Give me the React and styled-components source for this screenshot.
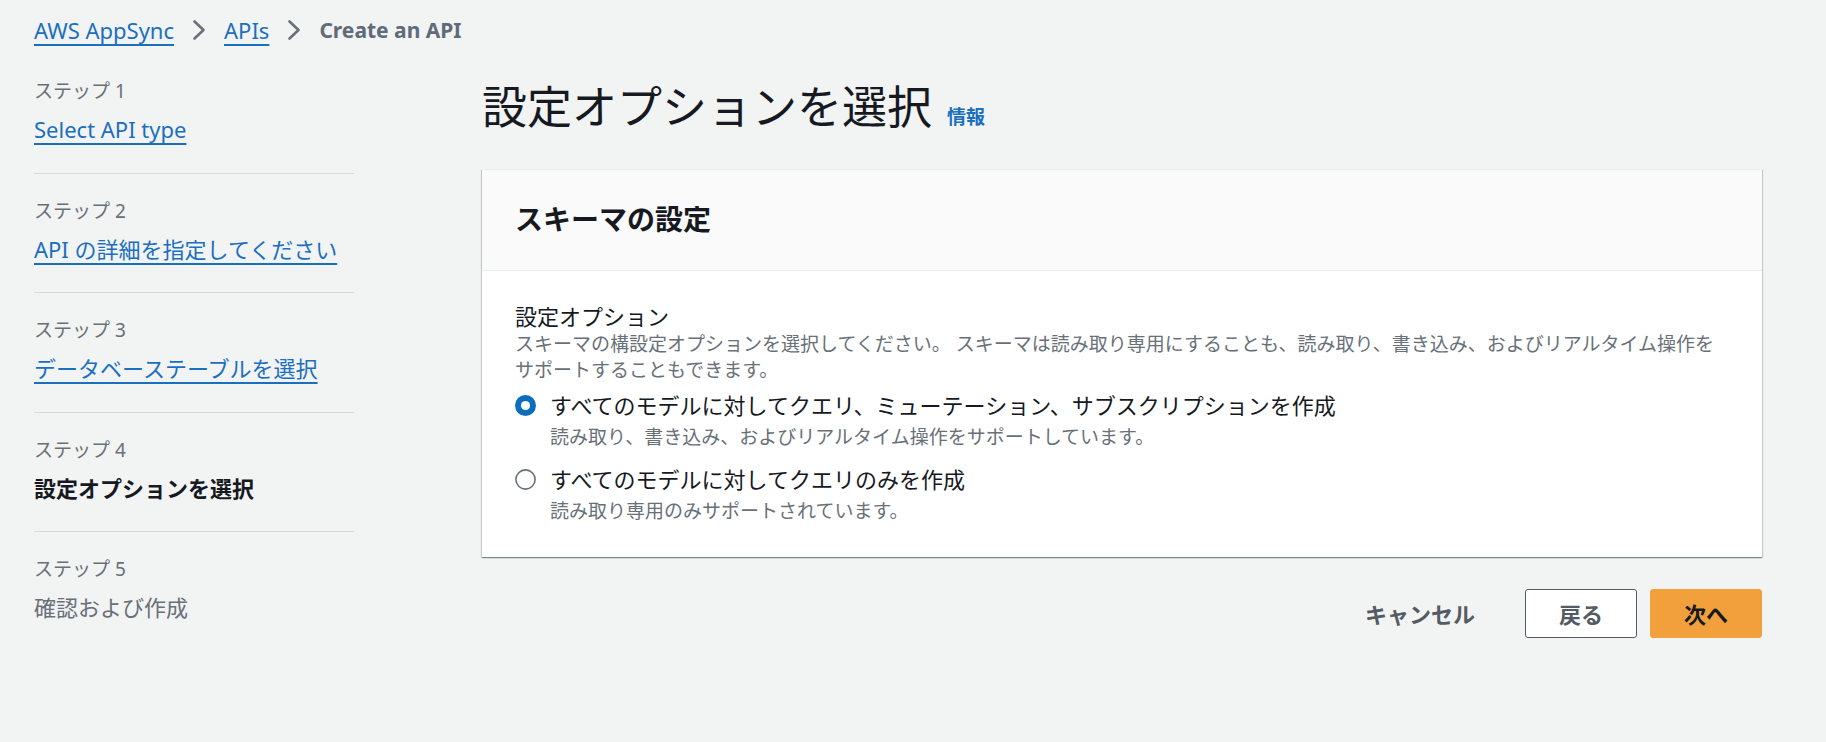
import React from 'react'
import styled, { createGlobalStyle } from 'styled-components'

const GlobalStyle = createGlobalStyle`
  html, body {
    margin: 0;
    padding: 0;
    background: #f2f3f3;
  }
  body {
    font-family: "Noto Sans", "Noto Sans CJK JP", sans-serif;
    color: #16191f;
  }
`

const linkBlue = '#1a6fbf'
const grey = '#687078'

const Page = styled.div`
  min-height: 742px;
  box-sizing: border-box;
  padding: 15px 64px 0 34px;
`

// Breadcrumbs
const Breadcrumbs = styled.nav`
  display: flex;
  align-items: center;
  gap: 18px;
  font-size: 22px;
  line-height: 30px;
`

const Crumb = styled.a`
  color: ${linkBlue};
  text-decoration: underline;
  text-decoration-thickness: 2px;
  text-underline-offset: 5px;
`

const CurrentCrumb = styled.span`
  color: #5f6b7a;
  font-size: 21px;
  font-weight: 700;
`

const Chevron = () => (
  <svg width="14" height="22" viewBox="0 0 14 22" fill="none">
    <path d="M2.5 2.5 L11.5 11 L2.5 19.5" stroke={grey} strokeWidth="2.6" strokeLinecap="round" strokeLinejoin="round" />
  </svg>
)

// Layout
const Layout = styled.div`
  display: grid;
  grid-template-columns: 320px 1fr;
  column-gap: 128px;
  margin-top: 34px;
`

// Wizard steps
const StepList = styled.ol`
  list-style: none;
  margin: 0;
  padding: 0;
`

const Step = styled.li`
  display: flex;
  flex-direction: column;
  align-items: flex-start;
  gap: 11px;
  padding: 25px 0 28.5px;
  border-bottom: 1px solid #d5dbdb;
  &:first-child {
    padding-top: 0;
  }
  &:last-child {
    border-bottom: none;
  }
`

const StepLabel = styled.span`
  font-size: 19px;
  line-height: 24px;
  color: ${grey};
`

const StepTitle = styled.span`
  font-size: 22px;
  line-height: 30px;
  font-weight: ${p => (p.$state === 'current' ? 700 : 400)};
  color: ${p => (p.$state === 'done' ? linkBlue : p.$state === 'current' ? '#16191f' : grey)};
  text-decoration: ${p => (p.$state === 'done' ? 'underline' : 'none')};
  text-decoration-thickness: 2px;
  text-underline-offset: 5px;
`

// Main
const Main = styled.main`
  display: flex;
  flex-direction: column;
  min-width: 0;
`

const TitleRow = styled.div`
  display: flex;
  align-items: baseline;
  gap: 15px;
`

const Title = styled.h1`
  margin: 0;
  font-size: 45px;
  line-height: 56px;
  font-weight: 400;
`

const InfoLink = styled.a`
  font-size: 19px;
  font-weight: 700;
  color: ${linkBlue};
  text-decoration: none;
`

const Card = styled.section`
  margin-top: 34px;
  background: #fff;
  border-top: 1px solid #eaeded;
  box-shadow: 0 1px 1px 0 rgba(0, 28, 36, 0.3), 1px 1px 1px 0 rgba(0, 28, 36, 0.15),
    -1px 1px 1px 0 rgba(0, 28, 36, 0.15);
`

const CardHeader = styled.div`
  background: #fafafa;
  border-bottom: 1px solid #eaeded;
  padding: 31px 33px 33px;
`

const CardTitle = styled.h2`
  margin: 0;
  font-size: 28px;
  line-height: 36px;
  font-weight: 700;
`

const CardBody = styled.div`
  padding: 30px 33px 35px;
`

const FieldLabel = styled.div`
  font-size: 22px;
  line-height: 30px;
`

const FieldDesc = styled.p`
  margin: 0;
  font-size: 19px;
  line-height: 26px;
  color: ${grey};
`

const Options = styled.div`
  display: flex;
  flex-direction: column;
  gap: 17px;
  margin-top: 8px;
`

const Option = styled.label`
  display: grid;
  grid-template-columns: 21px 1fr;
  column-gap: 14px;
  row-gap: 7px;
  align-items: center;
`

const OptionLabel = styled.span`
  font-size: 22px;
  line-height: 28px;
`

const OptionHint = styled.span`
  grid-column: 2;
  font-size: 19px;
  line-height: 22px;
  color: ${grey};
`

const Radio = ({ checked }) => (
  <svg width="21" height="21" viewBox="0 0 21 21">
    {checked ? (
      <>
        <circle cx="10.5" cy="10.5" r="10.5" fill="#0a6ebd" />
        <circle cx="10.5" cy="10.5" r="4.6" fill="#fff" />
      </>
    ) : (
      <circle cx="10.5" cy="10.5" r="9.6" fill="#fff" stroke={grey} strokeWidth="1.6" />
    )}
  </svg>
)

// Actions
const Actions = styled.div`
  display: flex;
  justify-content: flex-end;
  align-items: center;
  gap: 13px;
  margin-top: 32px;
`

const buttonStyles = {
  link: 'background: transparent; border-color: transparent; color: #545b64; padding: 0 36px;',
  normal: 'background: #fff; border-color: #545b64; color: #545b64;',
  primary: 'background: #f1a03b; border-color: #f1a03b; color: #16191f;',
}

const Button = styled.button`
  height: 49px;
  padding: 0 33px;
  border: 1px solid;
  border-radius: 3px;
  font-family: inherit;
  font-size: 22px;
  font-weight: 700;
  line-height: 30px;
  cursor: pointer;
  ${p => buttonStyles[p.$variant || 'normal']}
`

const steps = [
  { label: 'ステップ 1', title: 'Select API type', state: 'done' },
  { label: 'ステップ 2', title: 'API の詳細を指定してください', state: 'done' },
  { label: 'ステップ 3', title: 'データベーステーブルを選択', state: 'done' },
  { label: 'ステップ 4', title: '設定オプションを選択', state: 'current' },
  { label: 'ステップ 5', title: '確認および作成', state: 'pending' },
]

const options = [
  {
    label: 'すべてのモデルに対してクエリ、ミューテーション、サブスクリプションを作成',
    hint: '読み取り、書き込み、およびリアルタイム操作をサポートしています。',
    checked: true,
  },
  {
    label: 'すべてのモデルに対してクエリのみを作成',
    hint: '読み取り専用のみサポートされています。',
    checked: false,
  },
]

const App = () => (
  <>
    <GlobalStyle />
    <Page>
      <Breadcrumbs>
        <Crumb href="#">AWS AppSync</Crumb>
        <Chevron />
        <Crumb href="#">APIs</Crumb>
        <Chevron />
        <CurrentCrumb>Create an API</CurrentCrumb>
      </Breadcrumbs>

      <Layout>
        <StepList>
          {steps.map(s => (
            <Step key={s.label}>
              <StepLabel>{s.label}</StepLabel>
              <StepTitle as={s.state === 'done' ? 'a' : 'span'} href={s.state === 'done' ? '#' : undefined} $state={s.state}>
                {s.title}
              </StepTitle>
            </Step>
          ))}
        </StepList>

        <Main>
          <TitleRow>
            <Title>設定オプションを選択</Title>
            <InfoLink href="#">情報</InfoLink>
          </TitleRow>

          <Card>
            <CardHeader>
              <CardTitle>スキーマの設定</CardTitle>
            </CardHeader>
            <CardBody>
              <FieldLabel>設定オプション</FieldLabel>
              <FieldDesc>
                スキーマの構設定オプションを選択してください。 スキーマは読み取り専用にすることも、読み取り、書き込み、およびリアルタイム操作をサポートすることもできます。
              </FieldDesc>
              <Options>
                {options.map(o => (
                  <Option key={o.label}>
                    <Radio checked={o.checked} />
                    <OptionLabel>{o.label}</OptionLabel>
                    <OptionHint>{o.hint}</OptionHint>
                  </Option>
                ))}
              </Options>
            </CardBody>
          </Card>

          <Actions>
            <Button $variant="link">キャンセル</Button>
            <Button $variant="normal">戻る</Button>
            <Button $variant="primary">次へ</Button>
          </Actions>
        </Main>
      </Layout>
    </Page>
  </>
)

export default App
